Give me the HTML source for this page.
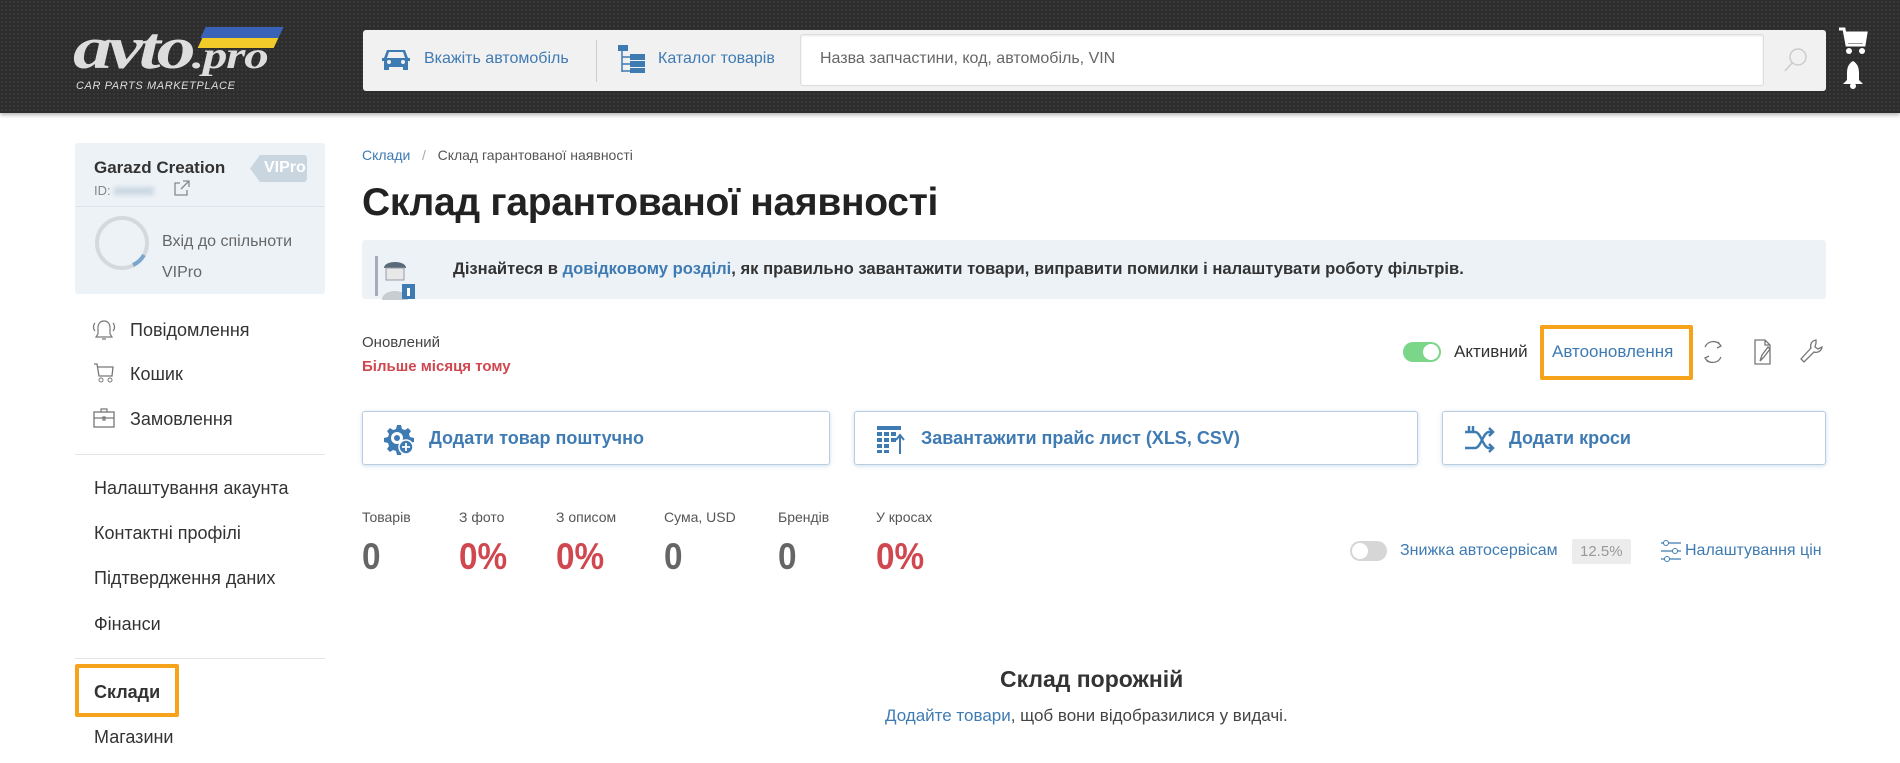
<!DOCTYPE html>
<html><head><meta charset="utf-8">
<style>
*{margin:0;padding:0;box-sizing:border-box}
body{width:1900px;height:763px;overflow:hidden;background:#fff;font-family:"Liberation Sans",sans-serif;color:#333;position:relative}
.a{position:absolute;white-space:nowrap}
.hdr{position:absolute;left:0;top:0;width:1900px;height:113px;background:#2d2d2d;background-image:radial-gradient(#3a3a3a 1px,transparent 1.2px);background-size:4px 4px;box-shadow:0 2px 4px rgba(0,0,0,.3)}
.blue{color:#3f7bb3}
.red{color:#d0474f}
.menu{font-size:18px;color:#333}
.btn{position:absolute;top:411px;height:54px;border:1px solid #b9cde0;border-radius:3px;box-shadow:0 1px 4px rgba(63,123,179,.25);background:#fff;font-size:18px;font-weight:bold;color:#3f7bb3}
.btn span{position:absolute;top:16px}
.lbl{font-size:14px;color:#555;top:509px}
.num{font-size:37px;font-weight:bold;color:#666;top:536px;transform:scaleX(.9);transform-origin:left}
</style></head><body>
<div class="hdr"></div>
<!-- logo -->
<div class="a" style="left:203px;top:27px;width:78px;height:11px;background:#3a63b8;transform:skewX(-25deg)"></div>
<div class="a" style="left:200px;top:38px;width:76px;height:10px;background:#f2cb2a;transform:skewX(-25deg)"></div>
<div class="a" style="left:73px;top:14px;font:italic bold 60px 'Liberation Serif',serif;color:#ddd;letter-spacing:-3px;transform:scaleX(1.3);transform-origin:left">avto<span style="font-size:38px;letter-spacing:-1px">.pro</span></div>
<div class="a" style="left:76px;top:80px;font:italic 11px 'Liberation Sans',sans-serif;color:#ddd;letter-spacing:.6px">CAR PARTS MARKETPLACE</div>
<!-- search bar -->
<div class="a" style="left:363px;top:30px;width:1463px;height:61px;background:#f1f1f1;border-radius:3px"></div>
<svg class="a" style="left:381px;top:48px" width="30" height="24" viewBox="0 0 30 24"><path d="M6 2h18l3 8h2v3h-2v9h-5v-3H8v3H3v-9H1v-3h2z" fill="#3f7bb3"/><path d="M8 4h14l2 6H6z" fill="#f1f1f1"/><circle cx="8" cy="14" r="2" fill="#f1f1f1"/><circle cx="22" cy="14" r="2" fill="#f1f1f1"/></svg>
<div class="a blue" style="left:424px;top:50px;font-size:16px">Вкажіть автомобіль</div>
<div class="a" style="left:596px;top:40px;width:1px;height:42px;background:#ccc"></div>
<svg class="a" style="left:617px;top:44px" width="30" height="30" viewBox="0 0 30 30"><rect x="1" y="1" width="10" height="6" fill="#3f7bb3"/><path d="M5 7v21M5 13h8M5 20h8M5 27h8" stroke="#3f7bb3" stroke-width="1.5"/><rect x="13" y="10" width="15" height="6" fill="#3f7bb3"/><rect x="13" y="17" width="15" height="6" fill="#3f7bb3"/><rect x="13" y="24" width="15" height="5" fill="#3f7bb3"/></svg>
<div class="a blue" style="left:658px;top:50px;font-size:16px">Каталог товарів</div>
<div class="a" style="left:800px;top:34px;width:964px;height:52px;background:#fff;border:1px solid #ddd;border-radius:3px;box-shadow:inset 0 1px 2px rgba(0,0,0,.1)"></div>
<div class="a" style="left:820px;top:50px;font-size:16px;color:#666">Назва запчастини, код, автомобіль, VIN</div>
<svg class="a" style="left:1782px;top:46px" width="28" height="28" viewBox="0 0 28 28"><circle cx="16" cy="11" r="8" fill="none" stroke="#ccc" stroke-width="1.5"/><path d="M10 17L3 25" stroke="#ccc" stroke-width="1.5"/></svg>
<svg class="a" style="left:1838px;top:27px" width="30" height="28" viewBox="0 0 30 28"><path d="M1 2h5l3 16h17l2-12H8" fill="none" stroke="#fff" stroke-width="3"/><path d="M8 6h19l-2 10H10z" fill="#fff"/><circle cx="11" cy="24" r="3" fill="#fff"/><circle cx="24" cy="24" r="3" fill="#fff"/></svg>
<svg class="a" style="left:1842px;top:60px" width="22" height="30" viewBox="0 0 22 30"><path d="M11 1c-5 3-6 7-6 13v6l-4 4h20l-4-4v-6c0-6-1-10-6-13z" fill="#fff"/><circle cx="11" cy="26" r="3" fill="#fff"/></svg>

<!-- sidebar card -->
<div class="a" style="left:75px;top:143px;width:250px;height:151px;background:#edf2f6;border-radius:3px"></div>
<div class="a" style="left:94px;top:158px;font-size:17px;font-weight:bold;color:#333">Garazd Creation</div>
<div class="a" style="left:250px;top:155px;width:57px;height:27px;background:#c9d6e0;border-radius:0 3px 3px 0;clip-path:polygon(10px 0,100% 0,100% 100%,10px 100%,0 50%);color:#fff;font-weight:bold;font-size:16px;padding:4px 0 0 14px">VIPro</div>
<div class="a" style="left:94px;top:183px;font-size:13px;color:#888">ID: <span style="display:inline-block;width:40px;height:8px;background:#cbd8e4;filter:blur(2px)"></span></div>
<svg class="a" style="left:173px;top:180px" width="17" height="17" viewBox="0 0 17 17"><path d="M7 3H2v12h12v-5M10 1h6v6M16 1L8 9" fill="none" stroke="#888" stroke-width="1.3"/></svg>
<div class="a" style="left:75px;top:206px;width:250px;height:1px;background:#dde4ea"></div>
<svg class="a" style="left:93px;top:214px" width="58" height="58" viewBox="0 0 58 58"><circle cx="29" cy="29" r="25" fill="none" stroke="#d5d9dd" stroke-width="4"/><path d="M51 41A25 25 0 0 1 40 51" fill="none" stroke="#7ba7cf" stroke-width="4"/></svg>
<div class="a" style="left:162px;top:233px;font-size:16px;color:#666">Вхід до спільноти</div>
<div class="a" style="left:162px;top:264px;font-size:16px;color:#666">VIPro</div>

<!-- menu -->
<svg class="a" style="left:91px;top:319px" width="26" height="22" viewBox="0 0 26 22"><path d="M13 2c-4 0-6 3-6 7v6l-2 3h16l-2-3V9c0-4-2-7-6-7zM11 20h4M4 4C2 6 2 10 4 12M22 4c2 2 2 6 0 8" fill="none" stroke="#777" stroke-width="1.2"/></svg>
<div class="a menu" style="left:130px;top:320px">Повідомлення</div>
<svg class="a" style="left:93px;top:362px" width="22" height="22" viewBox="0 0 22 22"><path d="M1 2h3l2 12h13l1-9H5" fill="none" stroke="#777" stroke-width="1.3"/><circle cx="8" cy="18" r="2" fill="none" stroke="#777"/><circle cx="17" cy="18" r="2" fill="none" stroke="#777"/></svg>
<div class="a menu" style="left:130px;top:364px">Кошик</div>
<svg class="a" style="left:93px;top:407px" width="22" height="22" viewBox="0 0 22 22"><rect x="1" y="5" width="20" height="15" fill="none" stroke="#777" stroke-width="1.3"/><path d="M8 5V2h6v3M1 11h20M10 10h2v3h-2z" fill="none" stroke="#777" stroke-width="1.2"/></svg>
<div class="a menu" style="left:130px;top:409px">Замовлення</div>
<div class="a" style="left:75px;top:454px;width:250px;height:1px;background:#e5e5e5"></div>
<div class="a menu" style="left:94px;top:478px">Налаштування акаунта</div>
<div class="a menu" style="left:94px;top:523px">Контактні профілі</div>
<div class="a menu" style="left:94px;top:568px">Підтвердження даних</div>
<div class="a menu" style="left:94px;top:614px">Фінанси</div>
<div class="a" style="left:75px;top:658px;width:250px;height:1px;background:#e5e5e5"></div>
<div class="a" style="left:75px;top:664px;width:104px;height:53px;border:4px solid #f7a21b;border-radius:2px"></div>
<div class="a menu" style="left:94px;top:682px;font-weight:bold">Склади</div>
<div class="a menu" style="left:94px;top:727px">Магазини</div>

<!-- main -->
<div class="a" style="left:362px;top:147px;font-size:14px"><span class="blue">Склади</span><span style="color:#aaa">&nbsp;&nbsp; / &nbsp;&nbsp;</span><span style="color:#555">Склад гарантованої наявності</span></div>
<div class="a" style="left:362px;top:181px;font-size:39px;font-weight:bold;color:#222;letter-spacing:-.3px">Склад гарантованої наявності</div>
<div class="a" style="left:362px;top:240px;width:1464px;height:59px;background:#edf2f6;border-radius:3px"></div>
<svg class="a" style="left:372px;top:250px" width="60" height="50" viewBox="0 0 60 50"><rect x="3" y="6" width="3" height="40" fill="#aab"/><path d="M12 18c0-8 22-8 22 0z" fill="#5a6a78"/><rect x="14" y="18" width="18" height="12" fill="#e8e8e8" stroke="#99a" /><path d="M10 50c0-12 26-12 26 0z" fill="#c8cdd2"/><rect x="30" y="34" width="13" height="15" fill="#3f7bb3"/><rect x="35" y="38" width="3" height="8" fill="#fff"/></svg>
<div class="a" style="left:453px;top:259px;font-size:16.6px;font-weight:bold;color:#333">Дізнайтеся в <span class="blue">довідковому розділі</span>, як правильно завантажити товари, виправити помилки і налаштувати роботу фільтрів.</div>

<div class="a" style="left:362px;top:334px;font-size:15px;color:#444">Оновлений</div>
<div class="a red" style="left:362px;top:358px;font-size:15px;font-weight:bold">Більше місяця тому</div>

<div class="a" style="left:1403px;top:342px;width:38px;height:20px;border-radius:10px;background:#7bd68a"></div>
<div class="a" style="left:1423px;top:344px;width:16px;height:16px;border-radius:8px;background:#fff"></div>
<div class="a" style="left:1454px;top:342px;font-size:17px;color:#333">Активний</div>
<div class="a" style="left:1540px;top:325px;width:153px;height:55px;border:4px solid #f7a21b;border-radius:2px"></div>
<div class="a blue" style="left:1552px;top:342px;font-size:17px">Автооновлення</div>
<svg class="a" style="left:1700px;top:338px" width="26" height="28" viewBox="0 0 26 28"><path d="M5 9A9 9 0 0 1 21 8M21 19A9 9 0 0 1 5 20M18 4l3 4-4 2M8 24l-3-4 4-2" fill="none" stroke="#777" stroke-width="1.3"/></svg>
<svg class="a" style="left:1751px;top:337px" width="24" height="30" viewBox="0 0 24 30"><path d="M4 3h10l5 5v19H4zM14 3v5h5M9 24l2-6 6-8 2 2-6 8z" fill="none" stroke="#777" stroke-width="1.3"/></svg>
<svg class="a" style="left:1798px;top:338px" width="26" height="28" viewBox="0 0 26 28"><path d="M18 2a6 6 0 0 0-5 8L3 21l3 3 10-10a6 6 0 0 0 8-5l-4 2-3-2 1-4z" fill="none" stroke="#777" stroke-width="1.3"/></svg>

<div class="btn" style="left:362px;width:468px"><svg style="position:absolute;left:20px;top:12px" width="32" height="32" viewBox="0 0 32 32"><path d="M14 1h4l1 4 3 1 3-2 3 3-2 3 1 3 4 1v4l-4 1-1 3 2 3-3 3-3-2-3 1-1 4h-4l-1-4-3-1-3 2-3-3 2-3-1-3-4-1v-4l4-1 1-3-2-3 3-3 3 2 3-1z" fill="#3f7bb3"/><circle cx="14" cy="14" r="6" fill="#fff"/><circle cx="14" cy="14" r="3" fill="#3f7bb3"/><circle cx="23" cy="23" r="7" fill="#3f7bb3" stroke="#fff" stroke-width="1.5"/><path d="M23 19v8M19 23h8" stroke="#fff" stroke-width="1.8"/></svg><span style="left:66px">Додати товар поштучно</span></div>
<div class="btn" style="left:854px;width:564px"><svg style="position:absolute;left:20px;top:12px" width="32" height="32" viewBox="0 0 32 32"><g fill="#3f7bb3"><rect x="2" y="2" width="24" height="4"/><rect x="2" y="8" width="5" height="4"/><rect x="9" y="8" width="5" height="4"/><rect x="16" y="8" width="5" height="4"/><rect x="2" y="14" width="5" height="4"/><rect x="9" y="14" width="5" height="4"/><rect x="16" y="14" width="5" height="4"/><rect x="2" y="20" width="5" height="4"/><rect x="9" y="20" width="5" height="4"/><rect x="2" y="26" width="5" height="3"/><rect x="9" y="26" width="5" height="3"/></g><path d="M25 30V12M21 16l4-5 4 5" fill="none" stroke="#3f7bb3" stroke-width="2"/></svg><span style="left:66px">Завантажити прайс лист (XLS, CSV)</span></div>
<div class="btn" style="left:1442px;width:384px"><svg style="position:absolute;left:20px;top:12px" width="32" height="32" viewBox="0 0 32 32"><path d="M2 8h10c6 0 8 16 14 16h4M2 24h10c6 0 8-16 14-16h4M26 4l4 4-4 4M26 20l4 4-4 4M6 2v6M10 2v6" fill="none" stroke="#3f7bb3" stroke-width="2.5"/></svg><span style="left:66px">Додати кроси</span></div>

<div class="a lbl" style="left:362px">Товарів</div>
<div class="a lbl red" style="left:459px">З фото</div>
<div class="a lbl red" style="left:556px">З описом</div>
<div class="a lbl" style="left:664px">Сума, USD</div>
<div class="a lbl" style="left:778px">Брендів</div>
<div class="a lbl red" style="left:876px">У кросах</div>
<div class="a num" style="left:362px">0</div>
<div class="a num" style="left:459px;color:#d0474f">0%</div>
<div class="a num" style="left:556px;color:#d0474f">0%</div>
<div class="a num" style="left:664px">0</div>
<div class="a num" style="left:778px">0</div>
<div class="a num" style="left:876px;color:#d0474f">0%</div>

<div class="a" style="left:1350px;top:541px;width:37px;height:20px;border-radius:10px;background:#d6d6d6"></div>
<div class="a" style="left:1352px;top:543px;width:16px;height:16px;border-radius:8px;background:#fff"></div>
<div class="a blue" style="left:1400px;top:542px;font-size:16px">Знижка автосервісам</div>
<div class="a" style="left:1572px;top:539px;width:59px;height:25px;background:#ececec;border-radius:2px;color:#999;font-size:15px;padding:4px 0 0 8px">12.5%</div>
<svg class="a" style="left:1660px;top:539px" width="22" height="24" viewBox="0 0 22 24"><path d="M1 4h20M1 12h20M1 20h20" stroke="#3f7bb3" stroke-width="1.2"/><circle cx="6" cy="4" r="2.5" fill="#fff" stroke="#3f7bb3"/><circle cx="15" cy="12" r="2.5" fill="#fff" stroke="#3f7bb3"/><circle cx="7" cy="20" r="2.5" fill="#fff" stroke="#3f7bb3"/></svg>
<div class="a blue" style="left:1685px;top:542px;font-size:16px">Налаштування цін</div>

<div class="a" style="left:1000px;top:666px;font-size:23px;font-weight:bold;color:#333">Склад порожній</div>
<div class="a" style="left:885px;top:706px;font-size:17px;color:#444"><span class="blue">Додайте товари</span>, щоб вони відобразилися у видачі.</div>
</body></html>
